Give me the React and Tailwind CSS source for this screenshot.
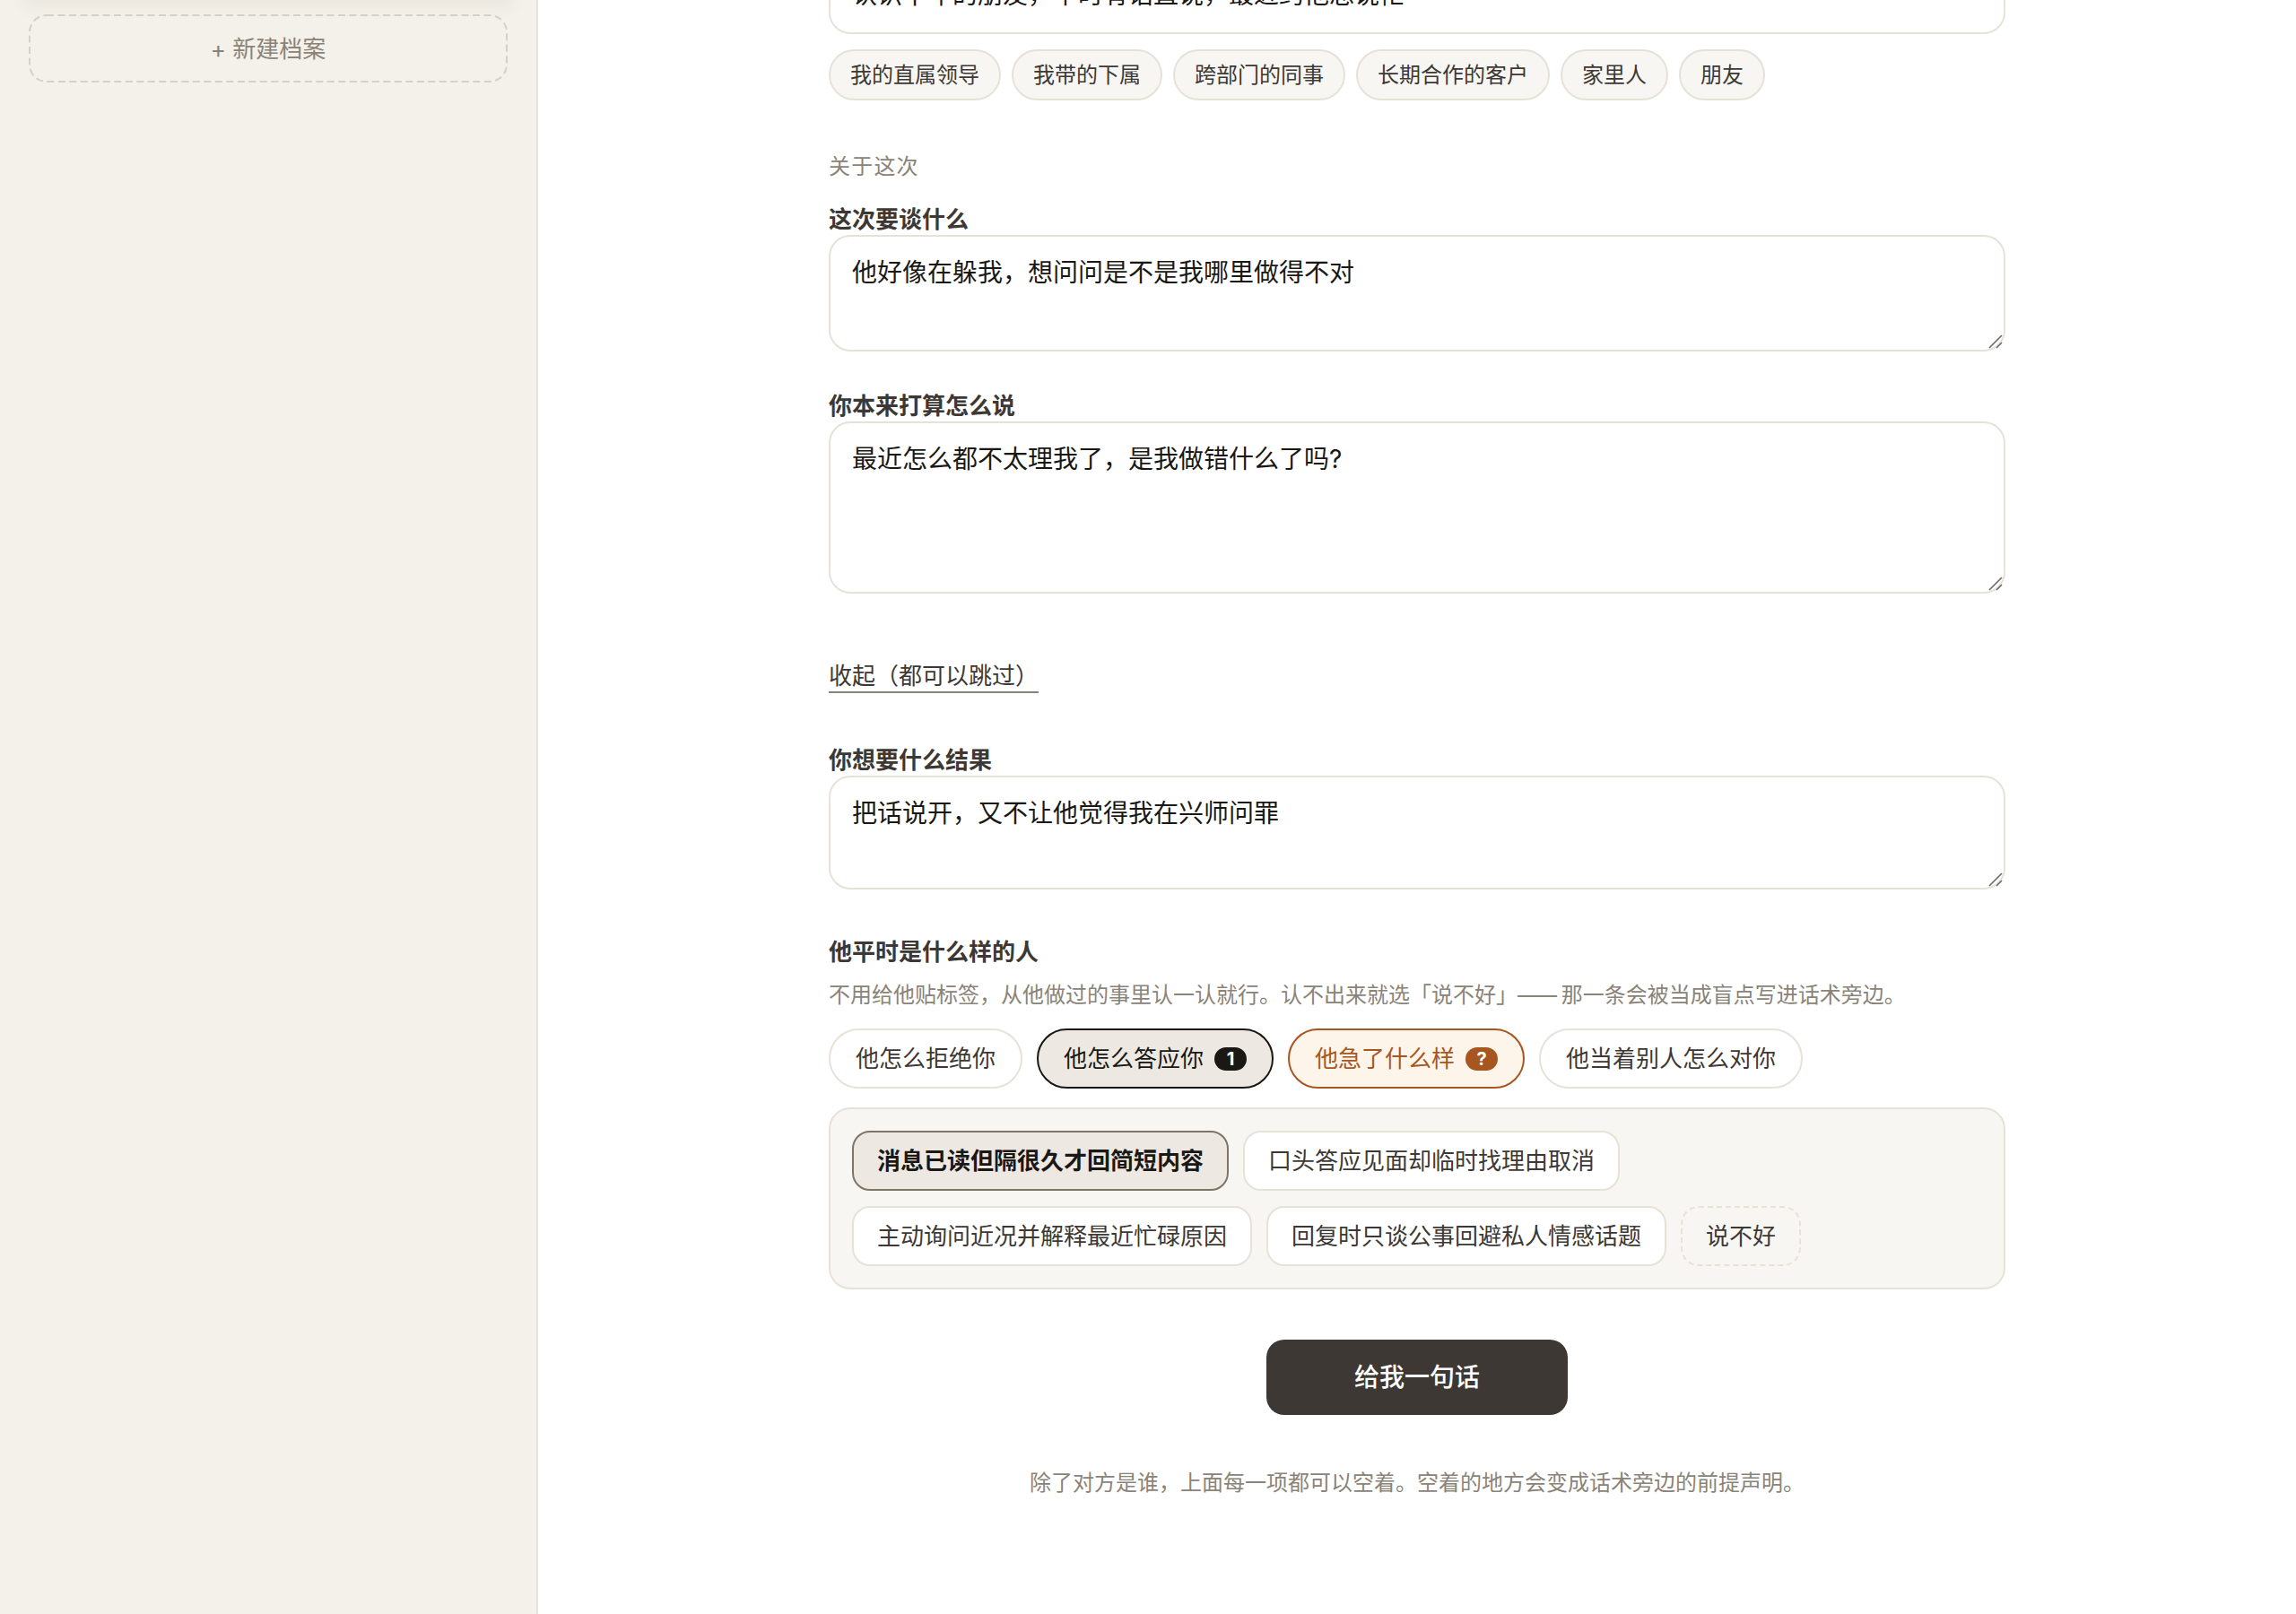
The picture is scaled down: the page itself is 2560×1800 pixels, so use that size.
import React from "react";

const FONT = 'Inter, "Noto Sans CJK SC", sans-serif';

const relationChips = ["我的直属领导", "我带的下属", "跨部门的同事", "长期合作的客户", "家里人", "朋友"];

const options = [
  { label: "消息已读但隔很久才回简短内容", kind: "selected" },
  { label: "口头答应见面却临时找理由取消" },
  { label: "主动询问近况并解释最近忙碌原因" },
  { label: "回复时只谈公事回避私人情感话题" },
  { label: "说不好", kind: "unsure" },
];

const optionStyles = {
  selected: "bg-[#ede9e2] border-[#7d7567] text-[#1a1814] font-semibold",
  unsure: "bg-transparent border-dashed border-[#e6e2d8] text-[#3d3833]",
  normal: "bg-white border-[#e6e2d8] text-[#3d3833]",
};

const ResizeGrip = () => (
  <svg className="absolute right-[2px] bottom-[2px] pointer-events-none" width="20" height="20" viewBox="0 0 20 20">
    <path d="M4 18 L18 4 M12 18 L18 12" stroke="#6b6b6b" strokeWidth="1.6" fill="none" />
  </svg>
);

const Box = ({ value, height, className = "", grip = true }) => (
  <div className={`relative ${className}`}>
    <textarea
      readOnly
      defaultValue={value}
      style={{ fontFamily: FONT }}
      className={`block w-full ${height} resize-none rounded-[24px] border-2 border-[#e6e2d8] bg-white px-[24px] py-[20px] text-[28px] leading-[40px] text-[#1a1814] outline-none overflow-hidden`}
    />
    {grip && <ResizeGrip />}
  </div>
);

const Label = ({ children, className = "" }) => (
  <div className={`text-[26px] leading-[34px] font-semibold text-[#3d3833] ${className}`}>{children}</div>
);

const Tab = ({ label, badge, tone }) => {
  const toneClass =
    tone === "active"
      ? "bg-[#ede9e2] border-[#1a1814] text-[#1a1814]"
      : tone === "warn"
        ? "bg-[#fdf5ea] border-[#a8561f] text-[#a8561f]"
        : "bg-white border-[#e6e2d8] text-[#3d3833]";
  return (
    <div className={`flex h-[67px] items-center rounded-full border-2 px-[28px] text-[26px] ${toneClass}`}>
      {label}
      {badge && (
        <span
          className={`ml-[12px] flex h-[26px] w-[36px] items-center justify-center rounded-full text-[20px] font-bold text-white ${
            tone === "warn" ? "bg-[#a8561f]" : "bg-[#1a1814]"
          }`}
        >
          {badge}
        </span>
      )}
    </div>
  );
};

export default function App() {
  return (
    <div className="flex h-[1800px] overflow-hidden bg-white" style={{ fontFamily: FONT }}>
      <aside className="h-full w-[600px] shrink-0 border-r-2 border-[#e8e4dc] bg-[#f4f1ea] px-[32px]">
        <div className="h-0 shadow-[0_0_18px_5px_rgba(90,80,60,0.11)]" />
        <button className="relative mt-[16px] flex h-[76px] w-full items-center justify-center text-[26px] text-[#8a8378]">
          <svg className="absolute inset-0" width="534" height="76" viewBox="0 0 534 76" fill="none">
            <rect x="1" y="1" width="532" height="74" rx="19" stroke="#d6d1c6" strokeWidth="2" strokeDasharray="8 4.5" />
          </svg>
          + 新建档案
        </button>
      </aside>

      <main className="flex-1 overflow-hidden">
        <div className="mx-auto w-[1312px]">
          <Box className="-mt-[48px]" height="h-[86px]" grip={false} value="认识十年的朋友，平时有话直说，最近约他总说忙" />

          <div className="mt-[17px] flex gap-[12px]">
            {relationChips.map((chip) => (
              <span
                key={chip}
                className="flex h-[57px] items-center rounded-full border-2 border-[#e6e2d8] bg-[#f8f6f2] px-[22px] text-[24px] text-[#3d3833]"
              >
                {chip}
              </span>
            ))}
          </div>

          <div className="mt-[57px] text-[24px] leading-[34px] tracking-[1.2px] text-[#8a8378]">关于这次</div>

          <Label className="mt-[25px]">这次要谈什么</Label>
          <Box height="h-[130px]" value="他好像在躲我，想问问是不是我哪里做得不对" />

          <Label className="mt-[44px] text-[#1a1814]">你本来打算怎么说</Label>
          <Box height="h-[192px]" value="最近怎么都不太理我了，是我做错什么了吗?" />

          <div className="mt-[75px]">
            <span className="inline-block border-b-2 border-[#8a8378] text-[26px] leading-[34px] text-[#3d3833]">
              收起（都可以跳过）
            </span>
          </div>

          <Label className="mt-[58px] font-medium">你想要什么结果</Label>
          <Box height="h-[127px]" value="把话说开，又不让他觉得我在兴师问罪" />

          <Label className="mt-[53px]">他平时是什么样的人</Label>
          <div className="mt-[14px] text-[24px] leading-[34px] text-[#8a8378]">
            不用给他贴标签，从他做过的事里认一认就行。认不出来就选「说不好」<span className="mr-[2px] tracking-[-4px]">——</span> 那一条会被当成盲点写进话术旁边。
          </div>

          <div className="mt-[20px] flex gap-[16px]">
            <Tab label="他怎么拒绝你" />
            <Tab label="他怎么答应你" badge="1" tone="active" />
            <Tab label="他急了什么样" badge="?" tone="warn" />
            <Tab label="他当着别人怎么对你" />
          </div>

          <div className="mt-[21px] flex flex-wrap gap-[17px_16px] rounded-[24px] border-2 border-[#e6e2d8] bg-[#f8f6f2] p-[24px]">
            {options.map((opt) => (
              <span
                key={opt.label}
                className={`flex h-[67px] items-center rounded-[20px] border-2 px-[26px] text-[26px] ${optionStyles[opt.kind || "normal"]}`}
              >
                {opt.label}
              </span>
            ))}
          </div>

          <div className="mt-[56px] flex justify-center">
            <button className="h-[84px] w-[336px] rounded-[20px] bg-[#3d3833] text-[28px] font-medium text-white">
              给我一句话
            </button>
          </div>

          <p className="mt-[59px] text-center text-[24px] leading-[34px] text-[#8a8378]">
            除了对方是谁，上面每一项都可以空着。空着的地方会变成话术旁边的前提声明。
          </p>
        </div>
      </main>
    </div>
  );
}
